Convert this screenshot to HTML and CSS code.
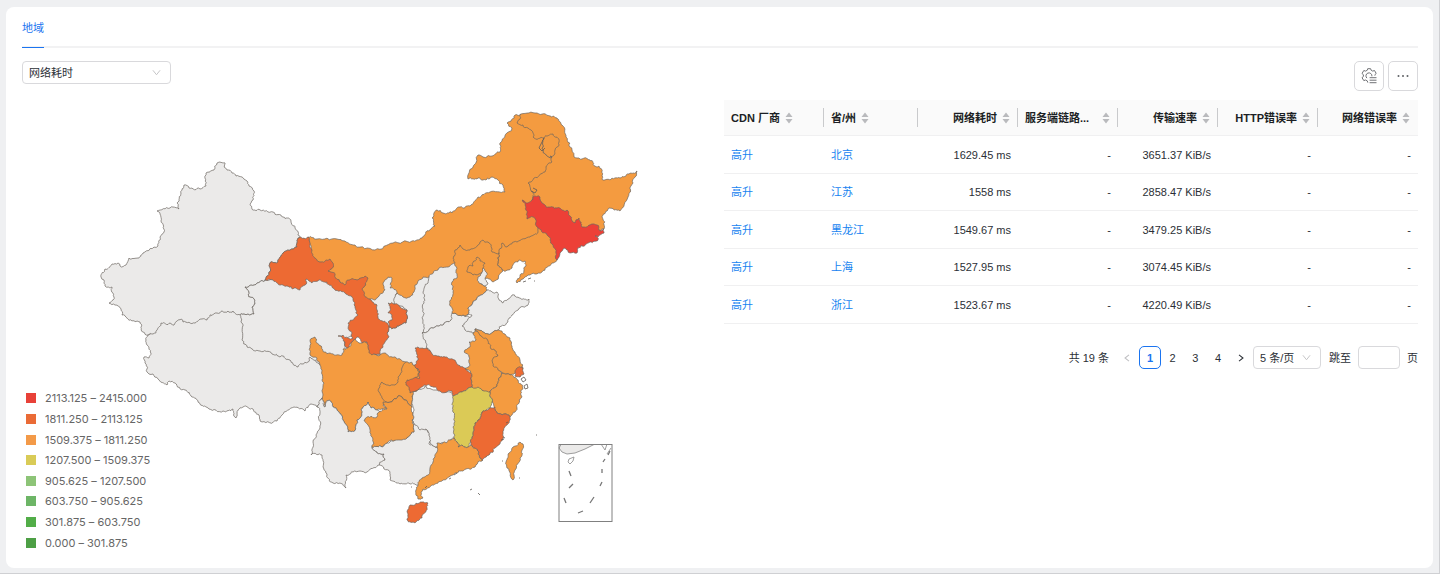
FILE: index.html
```html
<!DOCTYPE html>
<html lang="zh-CN">
<head>
<meta charset="utf-8">
<meta name="viewport" content="width=device-width, initial-scale=1">
<title>地域</title>
<link rel="stylesheet" href="styles.css">
</head>
<body>
<main class="card">
  <nav class="tabs"><button class="tab" type="button">地域</button></nav>
  <div class="content">
    <section class="map-panel">
      <div class="select metric">
        <select aria-label="指标"><option>网络耗时</option></select>
        <svg class="chevron" viewBox="0 0 10 10"><path d="M1 2.500 5 7.500 9 2.500"/></svg>
      </div>
      <figure class="map-figure">
        <svg class="map" id="map" viewBox="22 84 694 469" role="img" aria-label="网络耗时">
          <g id="regions"></g>
          <g class="detail">
            <path d="M544 138 541 144 539 148 542 151 545 148M533 188 537 190 535 193 531 191"/>
            <path d="M521 379l3-2 2 3-3 2zM524 386l3-2 1 4-3 1zM506 423l2-1M503 437l2 1M501 440l3-1M454 475l3-2M449 479l2-1M425 488l2-2M523 282l3-1M528 279l3-1M470 490l2-1M478 493l2 2M502 461h1M519 478h1M534 281h1M536 435h1M411 487h1"/>
          </g>
          <g class="inset">
            <path class="inset-land" d="M561 444.500 559 448 562 452 567 454 575 453 585 449 594 444.500z"/>
            <path class="inset-line" d="M569 459 574 457 573 461 570 464 568 462zM601 444 605 450 607 444M607 454 611 448"/>
            <path class="dash" d="M569 471 571 476M569 488 573 484M564 498 566 503M578 513 583 511M590 503 594 497M600 486 602 482M602 473V469M603 462 605 459M608 455 610 451"/>
            <rect class="frame" x="559" y="444.500" width="53" height="77"/>
          </g>
        </svg>
        <ul class="legend">
          <li><i class="c8"></i>2113.125 – 2415.000</li>
          <li><i class="c7"></i>1811.250 – 2113.125</li>
          <li><i class="c6"></i>1509.375 – 1811.250</li>
          <li><i class="c5"></i>1207.500 – 1509.375</li>
          <li><i class="c4"></i>905.625 – 1207.500</li>
          <li><i class="c3"></i>603.750 – 905.625</li>
          <li><i class="c2"></i>301.875 – 603.750</li>
          <li><i class="c1"></i>0.000 – 301.875</li>
        </ul>
      </figure>
    </section>
    <section class="table-panel">
      <div class="toolbar">
        <button class="tool" type="button" aria-label="设置">
          <svg viewBox="0 0 16 16"><path d="M6.800 14.600 6.300 12.900 4.600 12 2.800 12.600 1 9.700 2.400 8.500V6.700L1 5.500 2.800 2.500 4.600 3.100 6.300 2.200 6.700.7H9.600L10.100 2.200 11.700 3.100 13.500 2.500 15.200 5.500 13.900 6.700V7.600M5.900 10.100A3 3 0 1 1 10.900 8.300M8.600 9.700H15.500M8.600 12.200H15.500M8.600 14.700H15.500"/></svg>
        </button>
        <button class="tool" type="button" aria-label="更多">
          <svg class="dots" viewBox="0 0 16 16"><circle cx="3.500" cy="8" r="1"/><circle cx="8" cy="8" r="1"/><circle cx="12.500" cy="8" r="1"/></svg>
        </button>
      </div>
      <table class="data">
        <colgroup><col class="w-vendor"><col class="w-region"><col><col><col><col><col></colgroup>
        <thead>
          <tr>
            <th><div class="head">CDN 厂商<svg class="sort" viewBox="0 0 8 12"><path d="M4 .5 7.500 5H.5zM4 11.500.5 7H7.500z"/></svg></div></th>
            <th><div class="head">省/州<svg class="sort" viewBox="0 0 8 12"><path d="M4 .5 7.500 5H.5zM4 11.500.5 7H7.500z"/></svg></div></th>
            <th><div class="head end">网络耗时<svg class="sort" viewBox="0 0 8 12"><path d="M4 .5 7.500 5H.5zM4 11.500.5 7H7.500z"/></svg></div></th>
            <th><div class="head between">服务端链路...<svg class="sort" viewBox="0 0 8 12"><path d="M4 .5 7.500 5H.5zM4 11.500.5 7H7.500z"/></svg></div></th>
            <th><div class="head end">传输速率<svg class="sort" viewBox="0 0 8 12"><path d="M4 .5 7.500 5H.5zM4 11.500.5 7H7.500z"/></svg></div></th>
            <th><div class="head end">HTTP错误率<svg class="sort" viewBox="0 0 8 12"><path d="M4 .5 7.500 5H.5zM4 11.500.5 7H7.500z"/></svg></div></th>
            <th><div class="head end">网络错误率<svg class="sort" viewBox="0 0 8 12"><path d="M4 .5 7.500 5H.5zM4 11.500.5 7H7.500z"/></svg></div></th>
          </tr>
        </thead>
        <tbody>
          <tr><td><a href="#">高升</a></td><td><a href="#">北京</a></td><td>1629.45 ms</td><td>-</td><td>3651.37 KiB/s</td><td>-</td><td>-</td></tr>
          <tr><td><a href="#">高升</a></td><td><a href="#">江苏</a></td><td>1558 ms</td><td>-</td><td>2858.47 KiB/s</td><td>-</td><td>-</td></tr>
          <tr><td><a href="#">高升</a></td><td><a href="#">黑龙江</a></td><td>1549.67 ms</td><td>-</td><td>3479.25 KiB/s</td><td>-</td><td>-</td></tr>
          <tr><td><a href="#">高升</a></td><td><a href="#">上海</a></td><td>1527.95 ms</td><td>-</td><td>3074.45 KiB/s</td><td>-</td><td>-</td></tr>
          <tr><td><a href="#">高升</a></td><td><a href="#">浙江</a></td><td>1523.67 ms</td><td>-</td><td>4220.49 KiB/s</td><td>-</td><td>-</td></tr>
        </tbody>
      </table>
      <nav class="pagination" aria-label="分页">
        <span>共 19 条</span>
        <div class="pages">
          <button type="button" disabled aria-label="上一页"><svg viewBox="0 0 10 10"><path d="M7.500 1 2.500 5 7.500 9"/></svg></button>
          <button type="button" class="current" aria-current="page">1</button>
          <button type="button">2</button>
          <button type="button">3</button>
          <button type="button">4</button>
          <button type="button" aria-label="下一页"><svg viewBox="0 0 10 10"><path d="M2.500 1 7.500 5 2.500 9"/></svg></button>
        </div>
        <div class="select size">
          <select aria-label="每页条数"><option>5 条/页</option></select>
          <svg class="chevron" viewBox="0 0 10 10"><path d="M1 2.500 5 7.500 9 2.500"/></svg>
        </div>
        <label class="jump">跳至<input type="text">页</label>
      </nav>
    </section>
  </div>
</main>
<script src="map.js"></script>
</body>
</html>
```
FILE: styles.css
```css
* { box-sizing: border-box; }

body {
  min-height: 100vh;
  margin: 0;
  padding: 7px 6px 5px 6px;
  border-right: 1px solid #cfd0d3;
  border-bottom: 1px solid #cfd0d3;
  background: #eff0f2;
  color: #2b2f36;
  font: 11px/16px "Liberation Sans", "Noto Sans CJK SC", sans-serif;
}

button, select, input {
  font: inherit;
  color: inherit;
  margin: 0;
}

button {
  padding: 0;
  cursor: pointer;
}

.card {
  padding: 0 15px 15px 16px;
  border-radius: 8px;
  background: #fff;
}

.tabs {
  display: flex;
  height: 41px;
  border-bottom: 2px solid #f2f2f3;
}

.tab {
  height: 41px;
  padding: 2px 0 0;
  border: 0;
  border-bottom: 1px solid #1b74f0;
  background: none;
  color: #1b74f0;
}

.content {
  display: grid;
  grid-template-columns: 1fr 1fr;
  gap: 8px;
  padding-top: 13px;
}

.select {
  position: relative;
  height: 23px;
}

.select select {
  width: 100%;
  height: 100%;
  padding: 0 6px;
  border: 1px solid #d9d9dc;
  border-radius: 4px;
  background: #fff;
  appearance: none;
}

.metric { width: 149px; }

.size { width: 68px; }

.chevron {
  position: absolute;
  top: 7px;
  right: 10px;
  width: 9px;
  height: 9px;
  fill: none;
  stroke: #bfbfc2;
  pointer-events: none;
}

.map-figure {
  position: relative;
  margin: 0;
}

.map {
  display: block;
  width: 100%;
}

.region {
  stroke: #6b6560;
  stroke-width: .7;
  stroke-linejoin: round;
}

.none { fill: #ebeae9; }
.c8 { fill: #ed4037; background: #e84138; }
.c7 { fill: #ed6a33; background: #ea6b36; }
.c6 { fill: #f49b40; background: #f39a48; }
.c5 { fill: #dbca56; background: #d9cb57; }
.c4 { background: #8dc477; }
.c3 { background: #6db566; }
.c2 { background: #52ad48; }
.c1 { background: #4d9f45; }

.detail {
  fill: none;
  stroke: #5f5a56;
  stroke-width: .8;
}

.frame {
  fill: none;
  stroke: #808080;
}

.inset-land {
  fill: #ebeae9;
  stroke: #777;
  stroke-width: .7;
}

.inset-line {
  fill: none;
  stroke: #888;
  stroke-width: .8;
}

.dash {
  stroke: #777;
  stroke-width: 1.3;
}

.legend {
  position: absolute;
  left: 4px;
  bottom: 0;
  display: grid;
  grid-auto-rows: 1fr;
  height: 165px;
  margin: 0;
  padding: 0;
  list-style: none;
  color: #666;
  font-family: Inter, sans-serif;
}

.legend li {
  display: flex;
  align-items: center;
  gap: 9px;
}

.legend i {
  width: 10px;
  height: 10px;
}

.toolbar {
  display: flex;
  justify-content: flex-end;
  gap: 4px;
  margin-bottom: 9px;
}

.tool {
  display: grid;
  place-items: center;
  width: 30px;
  height: 30px;
  border: 1px solid #d9d9dc;
  border-radius: 5px;
  background: #fff;
}

.tool svg {
  width: 16px;
  height: 16px;
  fill: none;
  stroke: #707276;
}

.tool .dots {
  fill: #606266;
  stroke: none;
}

.data {
  width: 100%;
  table-layout: fixed;
  border-collapse: separate;
  border-spacing: 0;
}

.w-vendor { width: 100px; }
.w-region { width: 94px; }

th {
  height: 36px;
  padding: 0;
  border-bottom: 1px solid #f0f0f1;
  background: #fafafa;
  color: #1c1f24;
}

.head {
  display: flex;
  align-items: center;
  gap: 5px;
  height: 19px;
  padding: 0 7px;
  border-right: 1px solid #c9cacc;
  white-space: nowrap;
}

th:last-child .head { border-right-color: transparent; }

.end { justify-content: flex-end; }

.between { justify-content: space-between; }

.sort {
  width: 8px;
  height: 12px;
  fill: #b9babd;
}

td {
  height: 37px;
  padding: 0 7px;
  border-bottom: 1px solid #f0f0f1;
  text-align: right;
}

tr:nth-child(odd) td { height: 38px; }

td:nth-child(-n+2) { text-align: left; }

a {
  color: #1683f0;
  text-decoration: none;
}

.pagination {
  display: flex;
  align-items: center;
  justify-content: flex-end;
  margin-top: 22px;
}

.pages {
  display: grid;
  grid-template-columns: repeat(6, 1fr);
  width: 136px;
  margin: 0 1px 0 7px;
}

.pages button {
  display: grid;
  place-items: center;
  height: 23px;
  border: 1px solid transparent;
  border-radius: 5px;
  background: none;
}

.pages .current {
  border-color: #1b74f0;
  color: #1b74f0;
  font-weight: bold;
}

.pages svg {
  width: 8px;
  height: 8px;
  fill: none;
  stroke: #2b2f36;
  stroke-width: 1.3;
}

.pages :disabled svg { stroke: #bfbfc2; }

.jump {
  display: flex;
  align-items: center;
  gap: 7px;
  margin-left: 8px;
}

.jump input {
  width: 42px;
  height: 23px;
  border: 1px solid #d9d9dc;
  border-radius: 4px;
}
```
FILE: map.js
```js
// Regions in paint order: [fill class, outline points].
const regions = [
  ["none", "148,335 146,340 147,345 151,353 149,358 144,357 145,363 147,369 149,374 153,374 158,379 167,385 169,381 175,383 185,390 192,397 200,404 209,409 223,411 233,409 236,418 238,410 243,407 253,409 259,415 262,422 277,421 282,415 294,407 305,411 311,404 317,407 320,403 322,398 330,395 328,355 310,345 250,330 240,305 200,300 160,315"],
  ["none", "217,163 225,163 224,167 227,170 232,173 236,176 242,177 247,181 249,186 254,191 253,200 250,204 252,209 260,210 273,212 283,217 291,221 295,228 300,237 297,240 297,247 290,250 283,253 278,262 270,263 269,272 265,280 257,283 245,287 249,292 248,295 254,299 255,304 252,307 254,314 248,314 240,315 233,311 228,311 217,313 210,315 207,320 202,319 195,323 183,322 181,319 177,321 174,325 170,323 161,323 157,330 153,334 148,335 143,332 140,322 132,321 127,318 122,315 121,309 115,305 109,303 113,300 114,297 112,287 105,286 104,280 101,277 105,269 112,264 118,263 120,266 126,265 129,258 137,258 143,253 158,246 160,237 164,232 161,221 160,214 157,211 170,208 173,207 179,209 177,203 181,193 184,185 189,188 200,189 206,186 206,173 214,170"],
  ["none", "240,315 242,323 242,340 247,347 252,349 260,351 272,354 280,357 283,356 290,360 293,364 298,367 302,364 308,362 310,357 320,365 350,365 345,340 370,320 360,300 330,275 290,275 265,280 257,283 245,287 249,292 248,295 254,299 255,304 252,307 254,314 248,314"],
  ["c6", "308,237 317,239 337,239 345,241 355,245 375,250 393,243 412,241 422,238 430,230 435,226 432,218 434,213 437,210 443,213 452,213 460,207 470,206 478,197 490,192 505,192 503,185 492,177 483,180 478,178 468,179 468,175 478,155 483,157 492,156 500,152 500,143 512,128 507,123 515,115 521,114 540,125 560,160 550,210 545,240 520,255 480,275 450,290 430,290 410,310 395,310 375,305 362,300 350,288 330,277 318,266 310,252"],
  ["c6", "521,114 537,113 550,116 557,118 562,125 566,137 572,150 574,157 577,158 590,160 595,166 599,166 602,179 610,180 620,178 629,174 637,171 635,177 633,183 628,197 620,211 609,208 603,215 604,229 597,235 560,225 533,205 533,197 533,192 528,183 534,178 545,172 546,167 552,162 552,157 546,155 542,148 544,138 533,137 531,130 528,128 523,125 517,123 520,119"],
  ["c6", "544,138 553,134 559,142 557,147 555,150 554,155 550,156 552,157 546,155 542,148"],
  ["c6", "557,260 552,263 542,272 535,274 528,275 523,279 517,283 520,275 526,266 525,261 520,260 515,262 512,268 508,270 504,271 498,263 499,253 502,243 507,247 517,242 530,237 538,232 540,225 560,240"],
  ["c8", "522,200 528,203 533,197 540,197 542,203 548,207 557,208 562,210 567,210 570,216 575,223 579,218 582,227 589,225 593,224 597,225 599,230 604,229 604,233 598,237 595,236 598,240 590,242 585,245 578,248 577,253 570,253 565,248 557,260 553,245 547,235 537,227 533,217 527,219 526,207"],
  ["none", "370,299 377,298 385,290 383,283 388,277 392,278 390,288 397,293 395,300 410,310 410,325 389,327 375,325"],
  ["none", "397,293 395,297 394,304 407,310 406,323 400,325 395,328 389,327 387,333 380,340 375,354 383,356 390,360 403,364 415,367 430,360 428,348 436,320 436,277 429,277 423,277 415,285 414,292 410,297 403,297"],
  ["none", "429,277 438,270 441,267 448,267 455,263 470,270 465,320 451,320 443,325 435,327 422,333 423,320 424,303 423,292 428,283"],
  ["none", "422,333 435,327 443,325 451,320 452,313 463,315 480,320 482,340 478,370 465,371 440,366 427,348 425,340"],
  ["c6", "452,313 463,315 467,315 468,308 477,298 487,290 480,283 487,278 493,282 503,271 498,263 499,253 492,252 488,242 483,240 478,245 470,250 463,249 460,245 455,250 453,258 456,270 457,278 452,282 453,292 450,303"],
  ["none", "483,268 487,273 485,278 488,283 485,286 479,283 478,277 482,273"],
  ["c6", "477,257 480,261 485,263 483,268 482,272 479,274 473,275 467,272 468,267 473,266"],
  ["none", "472,315 467,315 468,308 477,298 487,290 492,292 497,292 499,300 503,303 508,299 512,295 520,298 529,299 528,305 520,308 512,315 508,322 498,330 493,332 488,334 483,332 475,329 473,333 465,330 462,326"],
  ["c6", "310,340 315,337 319,345 324,352 330,353 342,355 343,349 351,345 355,337 359,343 368,343 372,352 380,355 385,353 392,357 400,359 406,362 425,375 415,398 383,405 387,408 377,410 371,408 368,402 363,407 362,415 357,420 356,429 348,432 343,420 337,410 329,400 325,407 323,395 324,383 322,370 317,358 310,355"],
  ["c7", "300,237 308,237 312,250 315,258 321,262 330,259 333,263 332,268 328,271 335,275 340,282 345,285 349,280 357,280 365,276 368,278 366,285 362,289 364,295 370,299 377,305 378,317 387,323 389,327 387,333 389,337 385,342 383,347 380,354 372,355 368,348 367,342 362,343 357,337 352,342 347,348 345,343 338,336 343,335 348,338 353,338 349,330 348,323 358,315 354,305 353,300 345,293 333,288 327,282 319,280 312,283 306,279 305,285 300,290 293,289 283,285 273,280 265,280 269,272 270,263 278,262 283,253 290,250 297,247 297,240"],
  ["c7", "388,303 395,304 400,307 407,310 406,323 400,325 395,328 389,327 388,322 392,320 392,315 388,313 390,308"],
  ["c6", "406,362 411,362 415,365 420,372 415,378 420,385 413,395 412,407 405,400 398,396 393,400 386,402 382,398 379,392 382,382 388,385 395,385 400,375"],
  ["none", "325,407 329,400 337,410 343,420 348,432 356,429 357,420 362,415 363,407 368,402 371,408 377,410 390,415 380,440 372,447 377,452 384,454 385,460 378,465 367,472 360,471 353,472 346,475 346,488 340,483 333,483 327,475 323,467 322,455 311,455 313,442 320,428 320,413 317,407 320,400 322,398"],
  ["none", "372,447 382,447 393,441 407,438 414,432 413,422 417,424 423,428 430,433 430,445 437,447 445,455 440,475 420,485 410,484 400,484 390,480 390,472 379,464 385,460 384,454 377,452"],
  ["c6", "398,396 405,400 412,407 413,413 412,420 414,432 407,438 400,440 393,441 387,443 382,447 372,447 372,437 368,425 364,420 367,417 377,417 379,412 387,409 383,402 386,402 393,400"],
  ["none", "413,392 425,386 435,390 450,392 460,398 460,435 454,438 445,443 437,447 430,443 429,433 426,429 420,430 415,425 412,420 413,413 413,407"],
  ["c7", "415,348 427,348 432,354 440,357 450,359 456,362 463,367 471,373 472,387 462,392 453,396 452,391 440,391 433,387 425,385 418,390 410,393 406,385 407,380 414,378 420,378 420,372 415,367 418,360"],
  ["c6", "475,329 483,334 495,345 500,370 502,373 498,383 490,392 478,390 472,387 471,373 465,369 470,365 469,357 464,352 470,347 469,342 476,340 473,333"],
  ["c6", "475,329 483,332 488,334 493,332 498,330 502,331 505,334 510,338 512,346 515,352 520,360 523,365 523,369 515,373 510,375 502,373 498,370 493,366 493,358 498,355 496,351 491,349 488,341 482,337"],
  ["c6", "502,373 510,375 518,380 523,388 522,397 519,400 517,408 510,417 504,414 497,413 494,406 492,402 490,392 498,383"],
  ["c7", "515,372 517,368 522,367 524,374 520,377 515,376"],
  ["c5", "453,396 462,392 472,387 478,387 484,391 490,392 492,402 490,408 482,412 478,420 475,423 472,437 468,447 458,447 454,438 453,427 453,412 453,402"],
  ["c7", "495,407 497,413 504,414 510,417 507,425 503,432 503,438 495,448 489,455 482,461 479,452 471,445 472,437 475,423 478,420 482,412 489,409"],
  ["c6", "437,447 437,443 443,443 450,440 454,438 458,447 468,447 471,445 479,452 482,461 475,467 466,469 457,473 450,476 443,480 432,485 423,489 421,492 423,498 418,499 416,490 418,485 422,478 428,475 430,468 433,462 437,452"],
  ["c7", "407,512 410,505 422,502 428,503 427,508 422,518 415,523 407,520"],
  ["c6", "520,442 523,444 522,450 520,458 515,470 513,480 507,468 506,462 509,453 513,447"]
];

// The seed depends only on the two end points, so neighbours share one edge shape.
function noise(a, b, salt) {
  const n = Math.sin((a[0] + b[0]) * 12.9898 + (a[1] + b[1]) * 78.233 + salt * 37.719) * 43758.5453;
  return (n - Math.floor(n)) * 2 - 1;
}

function split(a, b, depth) {
  const dx = b[0] - a[0];
  const dy = b[1] - a[1];
  const length = Math.hypot(dx, dy);
  if (length < 2 || depth === 0) return [b];
  const sign = a[0] < b[0] || (a[0] === b[0] && a[1] < b[1]) ? 1 : -1;
  const offset = noise(a, b, depth) * Math.min(length * 0.26, 1.3) * sign;
  const mid = [(a[0] + b[0]) / 2 - dy / length * offset, (a[1] + b[1]) / 2 + dx / length * offset];
  return split(a, mid, depth - 1).concat(split(mid, b, depth - 1));
}

const group = document.getElementById("regions");
for (const [fill, outline] of regions) {
  const points = outline.split(" ").map(pair => pair.split(",").map(Number));
  const edge = points.flatMap((p, i) => split(p, points[(i + 1) % points.length], 3));
  const path = document.createElementNS("http://www.w3.org/2000/svg", "path");
  path.setAttribute("class", "region " + fill);
  path.setAttribute("d", "M" + edge.map(p => p[0].toFixed(1) + " " + p[1].toFixed(1)).join("L") + "Z");
  group.append(path);
}
```
